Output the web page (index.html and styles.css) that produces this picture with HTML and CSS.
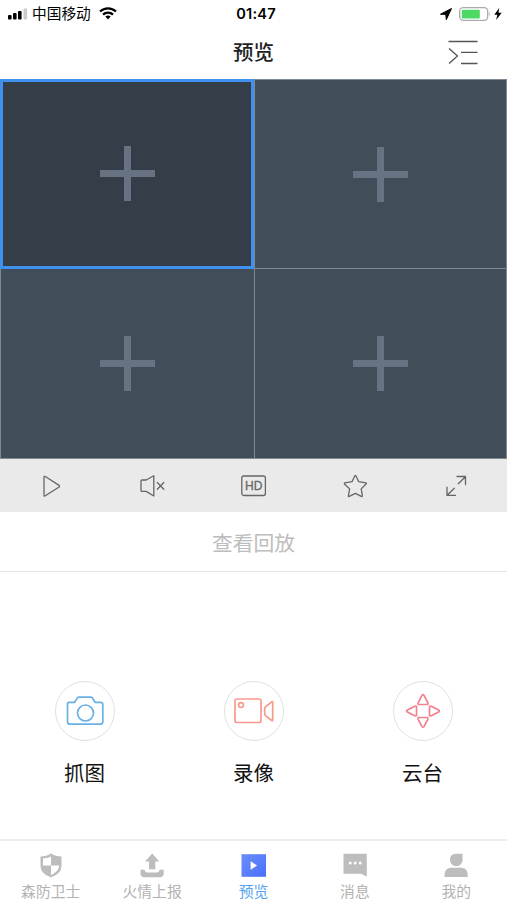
FILE: index.html
```html
<!DOCTYPE html>
<html lang="zh-CN">

<head>
    <meta charset="UTF-8">
    <meta name="viewport" content="width=device-width, initial-scale=1.0">
    <title>预览</title>
    <link rel="stylesheet" href="styles.css">
</head>

<body>
    <div class="status-bar">
        <div class="status-left">
            <svg width="20" height="12" viewBox="0 0 20 12">
                <rect x="0" y="7" width="3.6" height="4.5" rx="1" />
                <rect x="5" y="5" width="3.6" height="6.5" rx="1" />
                <rect x="10" y="3" width="3.6" height="8.5" rx="1" />
                <rect x="15.5" y="0.5" width="3.6" height="11" rx="1" fill="#ccc" />
            </svg>
            <span class="carrier">中国移动</span>
            <svg class="wifi" width="18" height="13" viewBox="0 0 18 13" fill="none" stroke="#000" stroke-width="2.3">
                <path d="M1 4.5C5.5 0.2 12.5 0.2 17 4.5" />
                <path d="M4 7.6C6.8 4.9 11.2 4.9 14 7.6" />
                <path d="M6.3 9.6Q9 7.4 11.7 9.6L9 12.4Z" fill="#000" stroke="none" />
            </svg>
        </div>
        <span class="time">01:47</span>
        <div class="status-right">
            <svg width="12" height="12" viewBox="0 0 12 12">
                <path d="M0.5 6.2L11.5 0.5L6.3 11.7L5.8 6.4Z" stroke="#000" stroke-linejoin="round" />
            </svg>
            <svg class="battery" width="32" height="14" viewBox="0 0 32 14">
                <rect x="0.7" y="0.7" width="28" height="12.6" rx="3.5" fill="#fff" stroke="#aaa" stroke-width="1.3" />
                <rect x="2.8" y="2.7" width="18" height="8.8" rx="1" fill="#4cd964" />
                <path d="M30 4.8Q31.8 7 30 9.2Z" fill="#aaa" />
            </svg>
            <svg width="8" height="12" viewBox="0 0 8 12">
                <path d="M5.2 0L0.3 6.8H3.3L2.2 12L7.7 4.8H4.5Z" />
            </svg>
        </div>
    </div>

    <div class="header">
        <h1>预览</h1>
        <svg class="menu" width="30" height="26" viewBox="0 0 30 26">
            <path d="M0.5 1.5H29.5M13 12.3H29.5M13 23.5H29.5M1 8.5L9.5 16L1 23.5" />
        </svg>
    </div>

    <div class="screens">
        <div class="screen active"></div>
        <div class="screen"></div>
        <div class="screen"></div>
        <div class="screen"></div>
    </div>

    <div class="toolbar">
        <div class="tool">
            <svg width="30" height="30" viewBox="0 0 30 30">
                <path d="M8 6.2V24.2Q8 25.6 9.3 24.8L23.1 16Q24 15.2 23.1 14.4L9.3 5.5Q8 4.9 8 6.2Z" />
            </svg>
        </div>
        <div class="tool">
            <svg width="30" height="30" viewBox="0 0 30 30">
                <path d="M5 9H9.2L16.8 4.8V25L9.2 20.4H5Q4 20.4 4 19.4V10Q4 9 5 9Z" />
                <path d="M20.3 11.5L26.8 18.3M26.8 11.5L20.3 18.3" />
            </svg>
        </div>
        <div class="tool">
            <svg width="30" height="30" viewBox="0 0 30 30">
                <rect x="3.8" y="5" width="23.6" height="19.5" rx="2" />
                <text x="15.7" y="18.9">HD</text>
            </svg>
        </div>
        <div class="tool">
            <svg width="30" height="30" viewBox="0 0 30 30">
                <path d="M14.9 4.8Q15.4 4 15.9 4.8L18.7 10.7L25.8 11.8Q26.8 12.1 26 13L21.2 17.9L22.4 24.8Q22.4 25.8 21.3 25.4L15.4 22.3L9.3 25.4Q8.3 25.8 8.4 24.8L9.6 17.9L4.5 13Q4 12.1 4.9 11.8L12 10.7Z" />
            </svg>
        </div>
        <div class="tool">
            <svg width="30" height="30" viewBox="0 0 30 30">
                <path d="M16 5.5H24.5V13.5M24.3 5.7L17.3 12.7M6 16.2V24.4H14.5M6.2 24.2L13.3 17.2" />
            </svg>
        </div>
    </div>

    <div class="playback">查看回放</div>

    <div class="actions">
        <div class="action">
            <div class="circle">
                <svg width="42" height="34" viewBox="0 0 42 34" stroke="#69b0e3">
                    <path d="M5 8.4H10.7L13 4.3Q13.5 3.2 14.8 3.2H27Q28.3 3.2 28.8 4.3L31 8.4H36.5Q38.8 8.4 38.8 10.7V27.5Q38.8 30.2 36.3 30.2H6Q3.5 30.2 3.5 27.7V10.3Q3.5 8.4 5 8.4Z" />
                    <circle cx="21.5" cy="19" r="8" />
                </svg>
            </div>
            <span>抓图</span>
        </div>
        <div class="action">
            <div class="circle">
                <svg width="42" height="34" viewBox="0 0 42 34" stroke="#fa9a8d">
                    <rect x="2" y="5" width="26" height="23.5" rx="2" />
                    <circle cx="8" cy="11" r="2.4" />
                    <path d="M39.7 8.3V26Q39.7 27.2 38.7 26.5L32.9 22Q31.7 21 31.7 19.7V14.7Q31.7 13.4 32.9 12.5L38.7 7.8Q39.7 7.2 39.7 8.3Z" />
                </svg>
            </div>
            <span>录像</span>
        </div>
        <div class="action">
            <div class="circle">
                <svg width="40" height="40" viewBox="0 0 40 40" stroke="#f47f8e">
                    <path id="arrow" d="M19 4.4L15.2 11.7Q14.6 13.5 16 13.5H24Q25.4 13.5 24.8 11.7L21 4.4Q20 2.9 19 4.4Z" />
                    <use href="#arrow" transform="rotate(90 20 20)" />
                    <use href="#arrow" transform="rotate(180 20 20)" />
                    <use href="#arrow" transform="rotate(270 20 20)" />
                </svg>
            </div>
            <span>云台</span>
        </div>
    </div>

    <div class="tab-bar">
        <div class="tab">
            <svg width="24" height="25" viewBox="0 0 24 25">
                <path d="M12 0.5Q16.5 3.5 22.5 3.5V13Q22.5 20.5 12 24.5Q1.5 20.5 1.5 13V3.5Q7.5 3.5 12 0.5Z" />
                <path d="M12 3.5V12.5H4V5.5Q8.5 5.3 12 3.5ZM12 12.5H20V13.5Q19.5 18.5 12 22Z" fill="#fff" />
            </svg>
            <span>森防卫士</span>
        </div>
        <div class="tab">
            <svg width="24" height="25" viewBox="0 0 24 25">
                <path d="M12.2 0.5L19.3 8.6H15.3V16.2H9V8.6H5Z" />
                <path d="M0.5 16.7H4Q4.8 16.7 5 17.8Q5.4 19.5 7 19.5H17.3Q18.8 19.5 19.2 17.8Q19.4 16.7 20.2 16.7H23.7V20.5Q23.7 24.2 20 24.2H4.2Q0.5 24.2 0.5 20.5Z" />
            </svg>
            <span>火情上报</span>
        </div>
        <div class="tab active">
            <svg width="25" height="25" viewBox="0 0 25 25">
                <defs>
                    <linearGradient id="blue" x1="0" y1="0" x2="1" y2="1">
                        <stop offset="0" stop-color="#6c8dfb" />
                        <stop offset="1" stop-color="#4b70f8" />
                    </linearGradient>
                </defs>
                <rect x="0.5" y="1.2" width="24.5" height="22.6" fill="url(#blue)" />
                <path d="M9.6 8.3L16.1 12.5L9.6 16.7Z" fill="#fff" />
            </svg>
            <span>预览</span>
        </div>
        <div class="tab">
            <svg width="24" height="25" viewBox="0 0 24 25">
                <path d="M0.5 0.8H23.8V23.8L18 20.8H0.5Z" />
                <g fill="#fff">
                    <circle cx="7.2" cy="10" r="1.5" />
                    <circle cx="12.2" cy="10" r="1.5" />
                    <circle cx="17.2" cy="10" r="1.5" />
                </g>
            </svg>
            <span>消息</span>
        </div>
        <div class="tab">
            <svg width="24" height="25" viewBox="0 0 24 25">
                <path d="M12 0.7H18.5V6.8C18.5 15.2 6 15.2 6 6.8Q6 0.7 12 0.7Z" />
                <path d="M6.5 14.8H18Q23.7 15.8 23.7 22V24H0.5V22Q0.5 15.8 6.5 14.8Z" />
            </svg>
            <span>我的</span>
        </div>
    </div>
</body>

</html>
```

FILE: styles.css
```css
* {
    box-sizing: border-box;
}

body {
    margin: 0;
    height: 900px;
    display: flex;
    flex-direction: column;
    overflow: hidden;
    background-color: #fff;
    font-family: "Liberation Sans", "Noto Sans CJK SC", sans-serif;
}

svg {
    display: block;
    flex-shrink: 0;
}

.status-bar {
    display: grid;
    grid-template-columns: 1fr auto 1fr;
    align-items: center;
    height: 27px;
    padding: 0 5px 0 8px;
}

.status-left,
.status-right {
    display: flex;
    align-items: center;
}

.status-right {
    justify-content: flex-end;
    gap: 3px;
}

.carrier {
    margin-left: 4px;
    padding-top: 2px;
    font-size: 14.7px;
    line-height: 25px;
}

.wifi {
    margin-left: 8px;
}

.battery {
    margin-left: 4px;
}

.time {
    padding-left: 2px;
    font-family: Inter, sans-serif;
    font-size: 14.6px;
    font-weight: 600;
    letter-spacing: 0.2px;
}

.header {
    display: grid;
    grid-template-columns: 1fr auto 1fr;
    align-items: center;
    height: 52px;
    padding: 0 29px;
}

.header h1 {
    grid-column: 2;
    margin: 0;
    color: #222;
    font-size: 20.5px;
    font-weight: 500;
    line-height: 50px;
}

.menu {
    justify-self: end;
    fill: none;
    stroke: #555;
    stroke-width: 1.3;
}

.screens {
    display: grid;
    grid-template-columns: 254px 1fr;
    grid-template-rows: 190px 190px;
    height: 380px;
}

.screen {
    display: grid;
    place-items: center;
    border: 1px solid #7f8994;
    border-right: none;
    background-color: #424d5a;
}

.screen:nth-child(even) {
    border-right: 1px solid #7f8994;
}

.screen:nth-child(n+3) {
    border-top: none;
    padding-bottom: 1px;
}

.screen.active {
    border: 3px solid #3e91ee;
    padding-bottom: 1px;
    background-color: #343d48;
}

/* plus sign */
.screen::before,
.screen::after {
    content: "";
    grid-area: 1 / 1;
    width: 55px;
    height: 7px;
    background-color: #677382;
}

.screen::after {
    width: 7px;
    height: 55px;
}

.toolbar {
    display: grid;
    grid-template-columns: repeat(5, 1fr);
    height: 53px;
    background-color: #eaeaea;
}

.tool {
    display: grid;
    place-items: center;
}

.tool svg {
    fill: none;
    stroke: #666;
    stroke-width: 1.3;
    stroke-linecap: round;
    stroke-linejoin: round;
}

.tool text {
    fill: #666;
    stroke-width: 0.3;
    font-size: 12px;
    text-anchor: middle;
}

.playback {
    height: 60px;
    padding-top: 2px;
    border-bottom: 1px solid #e5e5e5;
    color: #bdbdbd;
    font-size: 20.8px;
    line-height: 60px;
    text-align: center;
}

.actions {
    flex: 1;
    display: grid;
    grid-template-columns: repeat(3, 1fr);
    padding-top: 109px;
}

.action {
    display: flex;
    flex-direction: column;
    align-items: center;
    gap: 18px;
    color: #111;
    font-size: 20.5px;
    line-height: 30px;
}

.circle {
    display: grid;
    place-items: center;
    width: 60px;
    height: 60px;
    border: 1.5px solid #e0e0e0;
    border-radius: 50%;
}

.circle svg {
    fill: none;
    stroke-width: 1.7;
    stroke-linejoin: round;
}

.tab-bar {
    display: grid;
    grid-template-columns: repeat(5, 1fr);
    height: 61px;
    padding-top: 12px;
    border-top: 2px solid #ececec;
}

.tab {
    display: flex;
    flex-direction: column;
    align-items: center;
    gap: 3px;
    color: #b2b2b2;
    font-size: 14.8px;
    line-height: 22px;
}

.tab svg {
    fill: #bdbdbd;
}

.tab.active {
    color: #55a2f3;
}
```
